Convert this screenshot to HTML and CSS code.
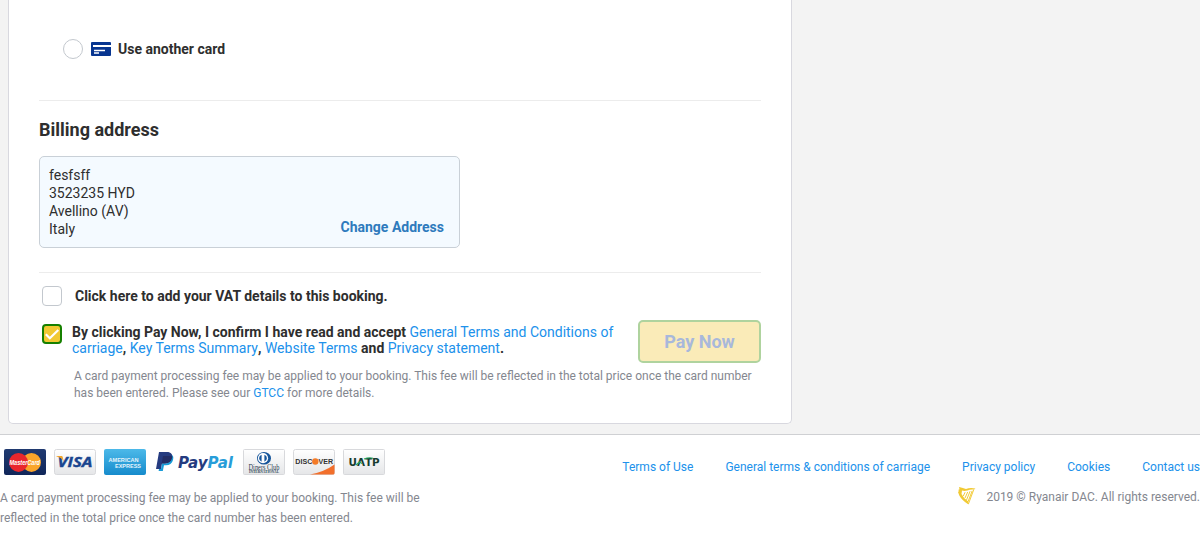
FILE: index.html
```html
<!DOCTYPE html>
<html lang="en">
<head>
<meta charset="utf-8">
<title>Payment</title>
<link rel="stylesheet" href="styles.css">
</head>
<body>
<main class="payment">
  <label class="other-card">
    <span class="radio"></span>
    <svg class="card-icon" width="20" height="14" viewBox="0 0 20 14"><path d="M1 0h18q1 0 1 1v12q0 1-1 1H1q-1 0-1-1V1q0-1 1-1z" fill="#073590"/><path d="M2 4H20" stroke="#fff" stroke-width="2"/><path d="M3 8.500h11M3 11h5" stroke="#fff" stroke-width="1.300"/></svg>
    <span>Use another card</span>
  </label>
  <section class="billing">
    <h2 class="billing-title">Billing address</h2>
    <div class="address">
      <p class="address-text">fesfsff<br>3523235 HYD<br>Avellino (AV)<br>Italy</p>
      <a class="change">Change Address</a>
    </div>
  </section>
  <section class="confirm">
    <label class="vat"><span class="box"></span><span>Click here to add your VAT details to this booking.</span></label>
    <div class="accept">
      <span class="box box-checked"><svg width="16" height="16" viewBox="0 0 16 16"><path d="M1.800 8.300l4 4L14.300 4" fill="none" stroke="#fff" stroke-width="2.200"/></svg></span>
      <p class="accept-text">By clicking Pay Now, I confirm I have read and accept <a>General Terms and Conditions of</a><br><a>carriage</a>, <a>Key Terms Summary</a>, <a>Website Terms</a> and <a>Privacy statement</a>.</p>
      <button class="pay">Pay Now</button>
    </div>
    <p class="fee">A card payment processing fee may be applied to your booking. This fee will be reflected in the total price once the card number<br>has been entered. Please see our <a>GTCC</a> for more details.</p>
  </section>
</main>
<footer class="footer">
  <div class="footer-left">
    <div class="logos">
      <svg width="42" height="26" viewBox="0 0 42 26"><defs><linearGradient id="navy" x2="0" y2="1"><stop stop-color="#203a70"/><stop offset="1" stop-color="#102659"/></linearGradient><linearGradient id="sky" x2="0" y2="1"><stop stop-color="#4cb9e9"/><stop offset="1" stop-color="#168bcc"/></linearGradient><linearGradient id="pale" x2="0" y2="1"><stop stop-color="#fff"/><stop offset="1" stop-color="#e5e6e8"/></linearGradient></defs><rect width="42" height="26" rx="2" fill="url(#navy)"/><circle cx="27.500" cy="13.400" r="9.500" fill="#faa52b"/><circle cx="14.500" cy="13.400" r="9.500" fill="#e9272d"/><text x="5.500" y="16.400" class="mc" textLength="30.500" lengthAdjust="spacingAndGlyphs">MasterCard</text></svg>
      <svg width="42" height="26" viewBox="0 0 42 26"><rect x=".5" y=".5" width="41" height="25" rx="2" fill="url(#pale)" stroke="#d8d9dc"/><text x="3.500" y="17.800" class="visa" textLength="35" lengthAdjust="spacingAndGlyphs">VISA</text><path d="M2.500 7h4.700c1 0 1.400.5 1.600 1.400l1 4.300C8.500 9.800 6 8 2.500 7.400z" fill="#f2a52b"/></svg>
      <svg width="42" height="26" viewBox="0 0 42 26"><rect width="42" height="26" rx="2" fill="url(#sky)"/><text x="4.500" y="12.700" class="amex" textLength="30" lengthAdjust="spacingAndGlyphs">AMERICAN</text><text x="11" y="18.500" class="amex" textLength="26" lengthAdjust="spacingAndGlyphs">EXPRESS</text></svg>
      <svg class="paypal" width="78" height="26" viewBox="0 0 78 26"><path d="M3 3h8c4 0 6 2.500 5 6-.8 4-3.500 5.500-7.500 5.500H6L5 20H0z" fill="#253b80"/><path d="M16.300 6c1.200 1.300 1.200 3 .7 5-.9 3.600-3.500 5.200-7 5.200H8L6.800 22H2.600L3 20h2l1-5.500h2.500c4.500 0 7.400-2.500 7.800-8.500z" fill="#179bd7"/><path d="M7 7h7.500c1 0 1.500.2 2 .6-.7 4.600-3.500 6.900-8 6.900H5.700z" fill="#222d65"/><text x="22" y="18.700" class="pp" textLength="55" lengthAdjust="spacingAndGlyphs"><tspan fill="#253b80">Pay</tspan><tspan fill="#279dd9">Pal</tspan></text></svg>
      <svg width="42" height="26" viewBox="0 0 42 26"><rect x=".5" y=".5" width="41" height="25" rx="1" fill="url(#pale)" stroke="#d8d9dc"/><ellipse cx="21" cy="9.200" rx="7" ry="6.300" fill="#17569b"/><circle cx="20" cy="9.200" r="5.100" fill="#fff"/><path d="M18.600 5.700a3.700 3.700 0 0 0 0 7zM21.400 5.700a3.700 3.700 0 0 1 0 7z" fill="#17569b"/><text x="5.500" y="20.600" class="diners" textLength="31" lengthAdjust="spacingAndGlyphs">Diners Club</text><text x="6" y="23.900" class="intl" textLength="30" lengthAdjust="spacingAndGlyphs">INTERNATIONAL</text></svg>
      <svg width="42" height="26" viewBox="0 0 42 26"><rect x=".5" y=".5" width="41" height="25" rx="2" fill="url(#pale)" stroke="#d8d9dc"/><path d="M41.500 15.500V24q0 1.500-1.500 1.500H17Q31 23 41.500 15.500z" fill="#f26f2b"/><text x="2.300" y="15.300" class="disc" textLength="17" lengthAdjust="spacingAndGlyphs">DISC</text><circle cx="22.300" cy="12.500" r="3.200" fill="#f47b28"/><text x="25.500" y="15.300" class="disc" textLength="14.500" lengthAdjust="spacingAndGlyphs">VER</text></svg>
      <svg width="42" height="26" viewBox="0 0 42 26"><rect x=".5" y=".5" width="41" height="25" rx="1" fill="url(#pale)" stroke="#d8d9dc"/><text x="5.500" y="16.700" class="uatp" textLength="31" lengthAdjust="spacingAndGlyphs">UΛTP</text><path d="M13 16l3.500-3 2.500 1.500M21 10q5-2 9-.8" fill="none" stroke="#28a860" stroke-width="1.200"/></svg>
    </div>
    <p class="footer-fee">A card payment processing fee may be applied to your booking. This fee will be<br>reflected in the total price once the card number has been entered.</p>
  </div>
  <div class="footer-right">
    <nav class="links"><a>Terms of Use</a><a>General terms &amp; conditions of carriage</a><a>Privacy policy</a><a>Cookies</a><a>Contact us</a></nav>
    <div class="copyright">
      <svg class="harp" width="18" height="18" viewBox="0 0 18 18"><path d="M1 0l3 .8 4 1.200Q12 .3 17.500 1.500L16 2.500Q12 2 9.500 3.600 6 4.400 4 3.600L3.500 7Q5.500 11.500 10.300 14.500L10.500 17.500Q4 13.500 1.300 8.500L0 5l1-1-.8-1 1.300-.8z" fill="#f1c933"/><path d="M5.300 9l1.800-3.800M7 11l2.700-6M8.500 13l3.600-8.800M10 14.800l4.200-11M10.400 17l5.400-14.500" fill="none" stroke="#f1c933" stroke-width=".95"/></svg>
      <span>2019 © Ryanair DAC. All rights reserved.</span>
    </div>
  </div>
</footer>
</body>
</html>
```
FILE: styles.css
```css
* { box-sizing: border-box; }
body { margin: 0; background: #f3f3f3; color: #2e2e2e; font-family: Roboto, "Liberation Sans", sans-serif; font-size: 14px; height: 559px; overflow: hidden; display: flex; flex-direction: column; }
p, h2 { margin: 0; }
p, a, span { white-space: nowrap; }
a { color: #2091eb; font-weight: 400; }
svg { display: block; flex: none; overflow: visible; }
.payment { width: 784px; height: 424px; margin-left: 8px; padding: 0 30px; background: #fff; border: 1px solid #d8d8df; border-top: 0; border-radius: 0 0 5px 5px; flex: none; }
.other-card { display: flex; align-items: center; height: 100px; padding: 0 0 2px 24px; font-weight: 700; }
.radio { width: 20px; height: 20px; border: 1px solid #c3c8ce; border-radius: 50%; margin-right: 8px; }
.card-icon { margin-right: 7px; }
.billing { border-top: 1px solid #ececec; height: 172px; }
.billing-title { font-size: 18px; line-height: 24px; padding-top: 17px; height: 55px; font-weight: 700; }
.address { width: 421px; height: 92px; display: flex; justify-content: space-between; align-items: flex-end; padding: 9px 15px 9px 9px; background: #f4faff; border: 1px solid #c9d0d7; border-radius: 5px; }
.address-text { line-height: 18px; }
.change { color: #2e7abd; font-weight: 700; line-height: 22px; }
.confirm { border-top: 1px solid #ececec; padding-top: 13px; }
.vat { display: flex; align-items: center; gap: 13px; height: 20px; padding-left: 3px; font-weight: 700; }
.box { width: 20px; height: 20px; border: 1px solid #c3c8ce; border-radius: 4px; flex: none; }
.box-checked { background: #f1c933; border: 2px solid #168000; margin-top: 4px; }
.accept { display: flex; align-items: flex-start; height: 43px; margin-top: 14px; padding-left: 3px; }
.accept-text { margin: 4px 0 0 10px; line-height: 16px; font-weight: 700; flex: 1; }
.pay { width: 123px; height: 43px; padding: 0; background: #faebb8; border: 2px solid #afd39e; border-radius: 5px; color: #a8b8db; font: 700 18px Roboto, sans-serif; }
.fee { color: #84878f; font-size: 12px; line-height: 17px; padding: 5px 0 0 35px; }
.footer { margin-top: 10px; border-top: 1px solid #cfd0d3; background: #fff; flex: 1; display: flex; justify-content: space-between; }
.logos { display: flex; gap: 8px; padding: 14px 0 0 4px; height: 53px; }
.paypal { margin: 0 1px 0 2px; }
.footer-fee, .copyright { font-size: 12px; color: #84878f; line-height: 20px; }
.footer-right { padding-top: 22px; }
.links { display: flex; gap: 32px; font-size: 12px; line-height: 20px; }
.copyright { display: flex; justify-content: flex-end; gap: 10px; margin-top: 10px; }
.mc { font: italic 700 7px "Liberation Sans", sans-serif; fill: #fff; }
.visa { font: italic 700 15px "Open Sans", sans-serif; fill: #19458f; stroke: #19458f; stroke-width: .4px; }
.amex { font: 700 5.8px "Liberation Sans", sans-serif; fill: #e4f4fc; }
.pp { font: italic 700 15.5px "DejaVu Sans", sans-serif; }
.diners { font: 400 7.5px "Liberation Serif", serif; fill: #293e50; }
.intl { font: 700 3.5px "Liberation Serif", serif; fill: #293e50; }
.disc { font: 700 8px "Liberation Sans", sans-serif; fill: #333; }
.uatp { font: 700 10px "DejaVu Sans", sans-serif; fill: #173d30; }
```
